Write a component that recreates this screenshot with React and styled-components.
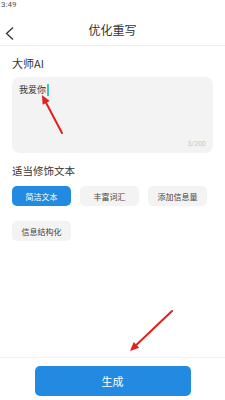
import React from "react";
import styled, { createGlobalStyle } from "styled-components";

const GlobalStyle = createGlobalStyle`
  html, body {
    margin: 0;
    padding: 0;
    background: #fff;
  }
  body {
    font-family: "Noto Sans CJK SC", "Noto Sans", sans-serif;
    color: #333;
  }
`;

const Page = styled.div`
  position: relative;
  width: 225px;
  height: 400px;
  display: flex;
  flex-direction: column;
  overflow: hidden;
  background: #fff;
`;

const StatusBar = styled.div`
  height: 14px;
  padding-left: 1px;
  font-family: "Roboto", "Liberation Sans", sans-serif;
  font-size: 8px;
  line-height: 10px;
  color: #555;
`;

const Header = styled.div`
  position: relative;
  height: 32px;
  display: flex;
  align-items: center;
  justify-content: center;
  border-bottom: 1px solid #f0f0f0;
  box-sizing: border-box;
`;

const BackButton = styled.div`
  position: absolute;
  left: 5px;
  top: 13px;
  width: 10px;
  height: 13px;
  display: flex;
`;

const Title = styled.div`
  font-size: 12px;
  color: #333;
  line-height: 1;
`;

const Content = styled.div`
  flex: 1;
  padding: 10px 12px 0 12px;
  display: flex;
  flex-direction: column;
`;

const Label = styled.div`
  font-size: ${(p) => p.size || 11}px;
  color: #333;
  line-height: 14px;
`;

const TextBox = styled.div`
  margin-top: 7px;
  height: 76px;
  background: #f3f3f3;
  border-radius: 8px;
  padding: 7px 7px 5px 7px;
  box-sizing: border-box;
  display: flex;
  flex-direction: column;
  justify-content: space-between;
`;

const InputText = styled.div`
  font-size: 9px;
  color: #333;
  line-height: 12px;
  display: flex;
  align-items: center;
`;

const Caret = styled.span`
  display: inline-block;
  width: 1.5px;
  height: 12px;
  margin-left: 1px;
  background: #3cc8c0;
`;

const Counter = styled.div`
  align-self: flex-end;
  font-size: 7px;
  color: #c8c8c8;
  font-family: "Roboto", "Liberation Sans", sans-serif;
`;

const Section = styled.div`
  margin-top: 11px;
`;

const Chips = styled.div`
  margin-top: 8px;
  display: grid;
  grid-template-columns: repeat(3, 59px);
  column-gap: 9px;
  row-gap: 15px;
`;

const Chip = styled.div`
  height: 20px;
  border-radius: 5px;
  display: flex;
  align-items: center;
  justify-content: center;
  font-size: 8px;
  background: ${(p) => (p.active ? "#228ae0" : "#f3f3f3")};
  color: ${(p) => (p.active ? "#fff" : "#444")};
`;

const Footer = styled.div`
  border-top: 1px solid #f2f2f2;
  height: 43px;
  box-sizing: border-box;
  display: flex;
  justify-content: center;
  padding-top: 8px;
`;

const PrimaryButton = styled.div`
  width: 156px;
  height: 30px;
  border-radius: 5px;
  background: #228ae0;
  color: #fff;
  font-size: 11px;
  display: flex;
  align-items: center;
  justify-content: center;
`;

const Overlay = styled.svg`
  position: absolute;
  left: 0;
  top: 0;
  pointer-events: none;
`;

const Arrow = ({ x1, y1, x2, y2 }) => {
  const dx = x2 - x1;
  const dy = y2 - y1;
  const len = Math.hypot(dx, dy);
  const ux = dx / len;
  const uy = dy / len;
  const head = 9;
  const w = 4;
  const bx = x2 - ux * head;
  const by = y2 - uy * head;
  const pts = `${x2},${y2} ${bx - uy * w},${by + ux * w} ${bx + uy * w},${by - ux * w}`;
  return (
    <g>
      <line x1={x1} y1={y1} x2={bx} y2={by} stroke="#e3201c" strokeWidth="2" strokeLinecap="round" />
      <polygon points={pts} fill="#e3201c" />
    </g>
  );
};

const chips = [
  { label: "简洁文本", active: true },
  { label: "丰富词汇" },
  { label: "添加信息量" },
  { label: "信息结构化" },
];

export default function App() {
  return (
    <>
      <GlobalStyle />
      <Page>
        <StatusBar>3:49</StatusBar>
        <Header>
          <BackButton>
            <svg width="10" height="13" viewBox="0 0 10 13">
              <polyline points="8,0.5 1.5,6.5 8,12.5" fill="none" stroke="#333" strokeWidth="1.3" />
            </svg>
          </BackButton>
          <Title>优化重写</Title>
        </Header>
        <Content>
          <Label>大师AI</Label>
          <TextBox>
            <InputText>
              我爱你
              <Caret />
            </InputText>
            <Counter>3/200</Counter>
          </TextBox>
          <Section>
            <Label size={10.5}>适当修饰文本</Label>
            <Chips>
              {chips.map((c) => (
                <Chip key={c.label} active={c.active}>
                  {c.label}
                </Chip>
              ))}
            </Chips>
          </Section>
        </Content>
        <Footer>
          <PrimaryButton>生成</PrimaryButton>
        </Footer>
        <Overlay width="225" height="400">
          <Arrow x1={62} y1={133} x2={42} y2={95} />
          <Arrow x1={172} y1={311} x2={130} y2={351} />
        </Overlay>
      </Page>
    </>
  );
}
